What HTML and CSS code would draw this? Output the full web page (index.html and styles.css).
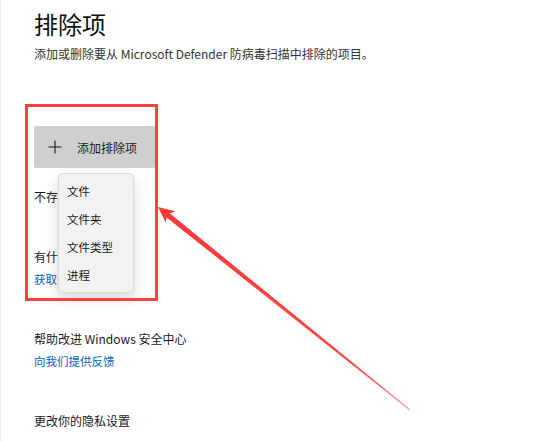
FILE: index.html
```html
<!DOCTYPE html>
<html lang="zh-CN">
<head>
    <meta charset="UTF-8">
    <meta name="viewport" content="width=device-width, initial-scale=1.0">
    <title>排除项</title>
    <link rel="stylesheet" href="styles.css">
</head>
<body>
    <div class="page">
        <h1 class="title">排除项</h1>
        <p class="desc">添加或删除要从 Microsoft Defender 防病毒扫描中排除的项目。</p>

        <button class="add-btn">
            <svg class="plus" width="14" height="14" viewBox="0 0 14 14">
                <path d="M7 0.5V13.5M0.5 7H13.5" stroke="#1a1a1a" stroke-width="1.1" fill="none"/>
            </svg>
            <span>添加排除项</span>
        </button>
        <p class="empty">不存在任何排除项</p>

        <div class="section first">
            <p>有什么疑问？</p>
            <a href="#">获取帮助</a>
        </div>
        <div class="section">
            <p>帮助改进 Windows 安全中心</p>
            <a href="#">向我们提供反馈</a>
        </div>
        <div class="section">
            <p>更改你的隐私设置</p>
        </div>

        <!-- dropdown opened from the add button -->
        <ul class="menu">
            <li>文件</li>
            <li>文件夹</li>
            <li>文件类型</li>
            <li>进程</li>
        </ul>

        <!-- red annotation -->
        <div class="callout"></div>
        <svg class="arrow" width="540" height="441" viewBox="0 0 540 441">
            <defs>
                <linearGradient id="fade" x1="158" y1="207" x2="410" y2="410" gradientUnits="userSpaceOnUse">
                    <stop offset="0" stop-color="#ff3838"/>
                    <stop offset="0.75" stop-color="#ff4646"/>
                    <stop offset="1" stop-color="#ff9a9a"/>
                </linearGradient>
            </defs>
            <polygon fill="url(#fade)" points="158,207 175.2,211.2 169.9,213.4 410.3,409.6 409.7,410.4 166.6,217.4 165.8,222.8"/>
        </svg>
    </div>
</body>
</html>
```

FILE: styles.css
```css
* {
    box-sizing: border-box;
    margin: 0;
    padding: 0;
}
body {
    font-family: "Noto Sans CJK SC", "Noto Sans", sans-serif;
    background: #fff;
    color: #1a1a1a;
    font-size: 12px;
    line-height: 20px;
}
.page {
    position: relative;
    width: 540px;
    height: 441px;
    overflow: hidden;
    background: linear-gradient(to right, #ececec 1px, #fff 1px);
    padding: 8px 0 0 34px;
}
.title {
    font-size: 24px;
    font-weight: 400;
    line-height: 32px;
    color: #111;
}
.desc {
    margin-top: 4px;
    color: #333;
}
.add-btn {
    display: flex;
    align-items: center;
    gap: 15px;
    margin-top: 62px;
    width: 121px;
    height: 42px;
    padding-left: 14px;
    background-color: #cfcfcf;
    border: none;
    border-radius: 2px;
    font-family: inherit;
    font-size: 12px;
    color: #1a1a1a;
}
.empty {
    margin-top: 19px;
}
.section {
    margin-top: 38px;
}
.section.first {
    margin-top: 40px;
}
.section a {
    display: block;
    line-height: 24px;
    font-size: 11.5px;
    color: #0067c0;
    text-decoration: none;
}
.menu {
    position: absolute;
    left: 58px;
    top: 173px;
    width: 76px;
    height: 120px;
    padding: 3px 0;
    list-style: none;
    background-color: #f2f2f2;
    border: 1px solid #dcdcdc;
    border-radius: 5px;
    box-shadow: 0 6px 14px rgba(0, 0, 0, 0.16);
}
.menu li {
    height: 28px;
    line-height: 28px;
    padding-left: 8px;
    font-size: 11.5px;
}
.callout {
    position: absolute;
    left: 25px;
    top: 104px;
    width: 133px;
    height: 197px;
    border: 3px solid #ff4040;
}
.arrow {
    position: absolute;
    left: 0;
    top: 0;
    pointer-events: none;
}
```
